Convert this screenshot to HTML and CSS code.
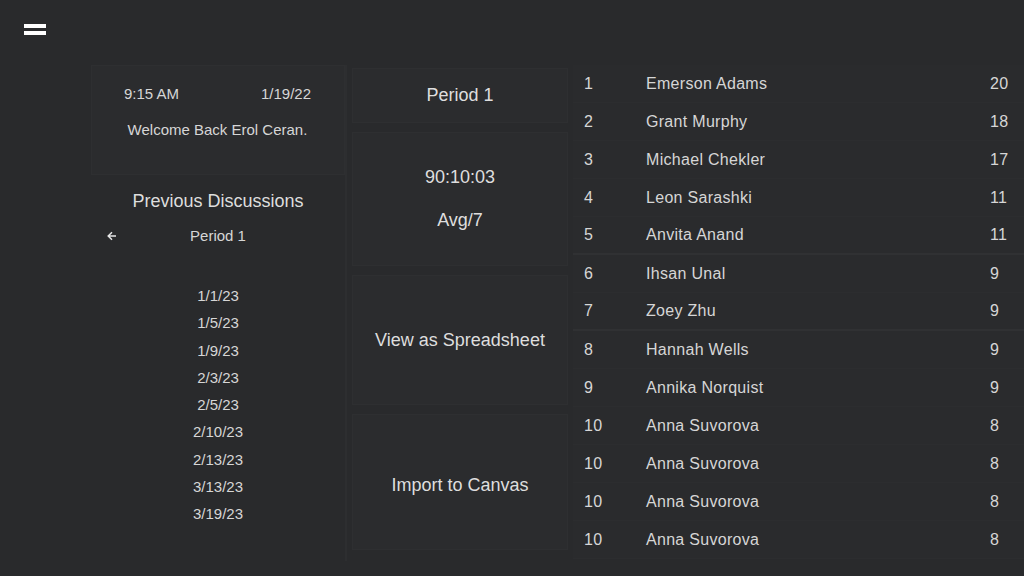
FILE: index.html
```html
<!DOCTYPE html>
<html>
<head>
    <title>Discussions</title>
    <meta name="viewport" content="width=device-width, initial-scale=1.0">
    <link rel="stylesheet" href="styles.css">
</head>
<body>
    <div class="topbar">
        <div class="menu-btn">
            <span></span>
            <span></span>
        </div>
    </div>

    <div class="main">
        <div class="left">
            <div class="card welcome">
                <div class="time-row">
                    <span>9:15 AM</span>
                    <span>1/19/22</span>
                </div>
                <div class="welcome-text">Welcome Back Erol Ceran.</div>
            </div>

            <div class="history">
                <h2>Previous Discussions</h2>
                <div class="period-row">
                    <svg class="back" width="10" height="10" viewBox="0 0 10 10">
                        <path d="M9 5H1.5M5 1.2L1.2 5L5 8.8" fill="none" stroke="#e6e6e6" stroke-width="1.5"/>
                    </svg>
                    <span>Period 1</span>
                </div>
                <ul class="dates">
                    <li>1/1/23</li>
                    <li>1/5/23</li>
                    <li>1/9/23</li>
                    <li>2/3/23</li>
                    <li>2/5/23</li>
                    <li>2/10/23</li>
                    <li>2/13/23</li>
                    <li>3/13/23</li>
                    <li>3/19/23</li>
                </ul>
            </div>
        </div>

        <div class="middle">
            <div class="card period">Period 1</div>
            <div class="card stats">
                <div>90:10:03</div>
                <div>Avg/7</div>
            </div>
            <div class="card action">View as Spreadsheet</div>
            <div class="card action">Import to Canvas</div>
        </div>

        <div class="right">
            <div class="row"><span class="rank">1</span><span class="name">Emerson Adams</span><span class="score">20</span></div>
            <div class="row"><span class="rank">2</span><span class="name">Grant Murphy</span><span class="score">18</span></div>
            <div class="row"><span class="rank">3</span><span class="name">Michael Chekler</span><span class="score">17</span></div>
            <div class="row"><span class="rank">4</span><span class="name">Leon Sarashki</span><span class="score">11</span></div>
            <div class="row group-end"><span class="rank">5</span><span class="name">Anvita Anand</span><span class="score">11</span></div>
            <div class="row"><span class="rank">6</span><span class="name">Ihsan Unal</span><span class="score">9</span></div>
            <div class="row group-end"><span class="rank">7</span><span class="name">Zoey Zhu</span><span class="score">9</span></div>
            <div class="row"><span class="rank">8</span><span class="name">Hannah Wells</span><span class="score">9</span></div>
            <div class="row"><span class="rank">9</span><span class="name">Annika Norquist</span><span class="score">9</span></div>
            <div class="row"><span class="rank">10</span><span class="name">Anna Suvorova</span><span class="score">8</span></div>
            <div class="row"><span class="rank">10</span><span class="name">Anna Suvorova</span><span class="score">8</span></div>
            <div class="row"><span class="rank">10</span><span class="name">Anna Suvorova</span><span class="score">8</span></div>
            <div class="row"><span class="rank">10</span><span class="name">Anna Suvorova</span><span class="score">8</span></div>
        </div>
    </div>
</body>
</html>
```

FILE: styles.css
```css
body {
    margin: 0;
    background-color: #292a2c;
    color: #d6d6d6;
    font-family: "Liberation Sans", Arial, sans-serif;
    font-size: 15px;
    height: 576px;
    overflow: hidden;
}

.topbar {
    height: 65px;
    padding: 24px 0 0 24px;
    box-sizing: border-box;
}

.menu-btn span {
    display: block;
    width: 22px;
    height: 4px;
    background-color: #ffffff;
    margin-bottom: 3px;
}

.main {
    display: grid;
    grid-template-columns: 256px 216px 1fr;
    gap: 5px;
    padding-left: 91px;
    height: 496px;
}

.card {
    background-color: #2b2c2e;
    border: 1px solid #2e2f31;
    box-sizing: border-box;
}

.left {
    display: flex;
    flex-direction: column;
    border-right: 2px solid #2d2e30;
}

.welcome {
    height: 110px;
    padding: 19px 33px 0 32px;
}

.time-row {
    display: flex;
    justify-content: space-between;
}

.welcome-text {
    text-align: center;
    margin-top: 19px;
}

.history {
    flex: 1;
    text-align: center;
}

.history h2 {
    font-weight: normal;
    font-size: 18px;
    margin: 16px 0 0 0;
    color: #dedede;
}

.period-row {
    position: relative;
    margin-top: 15px;
}

.period-row .back {
    position: absolute;
    left: 16px;
    top: 4px;
}

.dates {
    list-style: none;
    margin: 38px 0 0 0;
    padding: 0;
}

.dates li {
    height: 27.3px;
    line-height: 27.3px;
}

.middle {
    display: flex;
    flex-direction: column;
    gap: 9px;
    padding: 3px 0 11px 0;
}

.middle .card {
    display: flex;
    flex-direction: column;
    align-items: center;
    justify-content: center;
    font-size: 18px;
    color: #dedede;
}

.period {
    height: 55px;
}

.stats {
    height: 134px;
    gap: 22px;
}

.action {
    flex: 1;
}

.action:last-child {
    padding-top: 6px;
}

.right {
    display: flex;
    flex-direction: column;
}

.row {
    display: flex;
    align-items: center;
    height: 38px;
    flex-shrink: 0;
    padding-left: 11px;
    border-bottom: 1px solid #2c2d2f;
    box-sizing: border-box;
    font-size: 16px;
    letter-spacing: 0.3px;
    background-color: #2a2b2d;
}

.row.group-end {
    border-bottom: 2px solid #303133;
}

.rank {
    width: 62px;
}

.name {
    flex: 1;
}

.score {
    width: 34px;
}
```
